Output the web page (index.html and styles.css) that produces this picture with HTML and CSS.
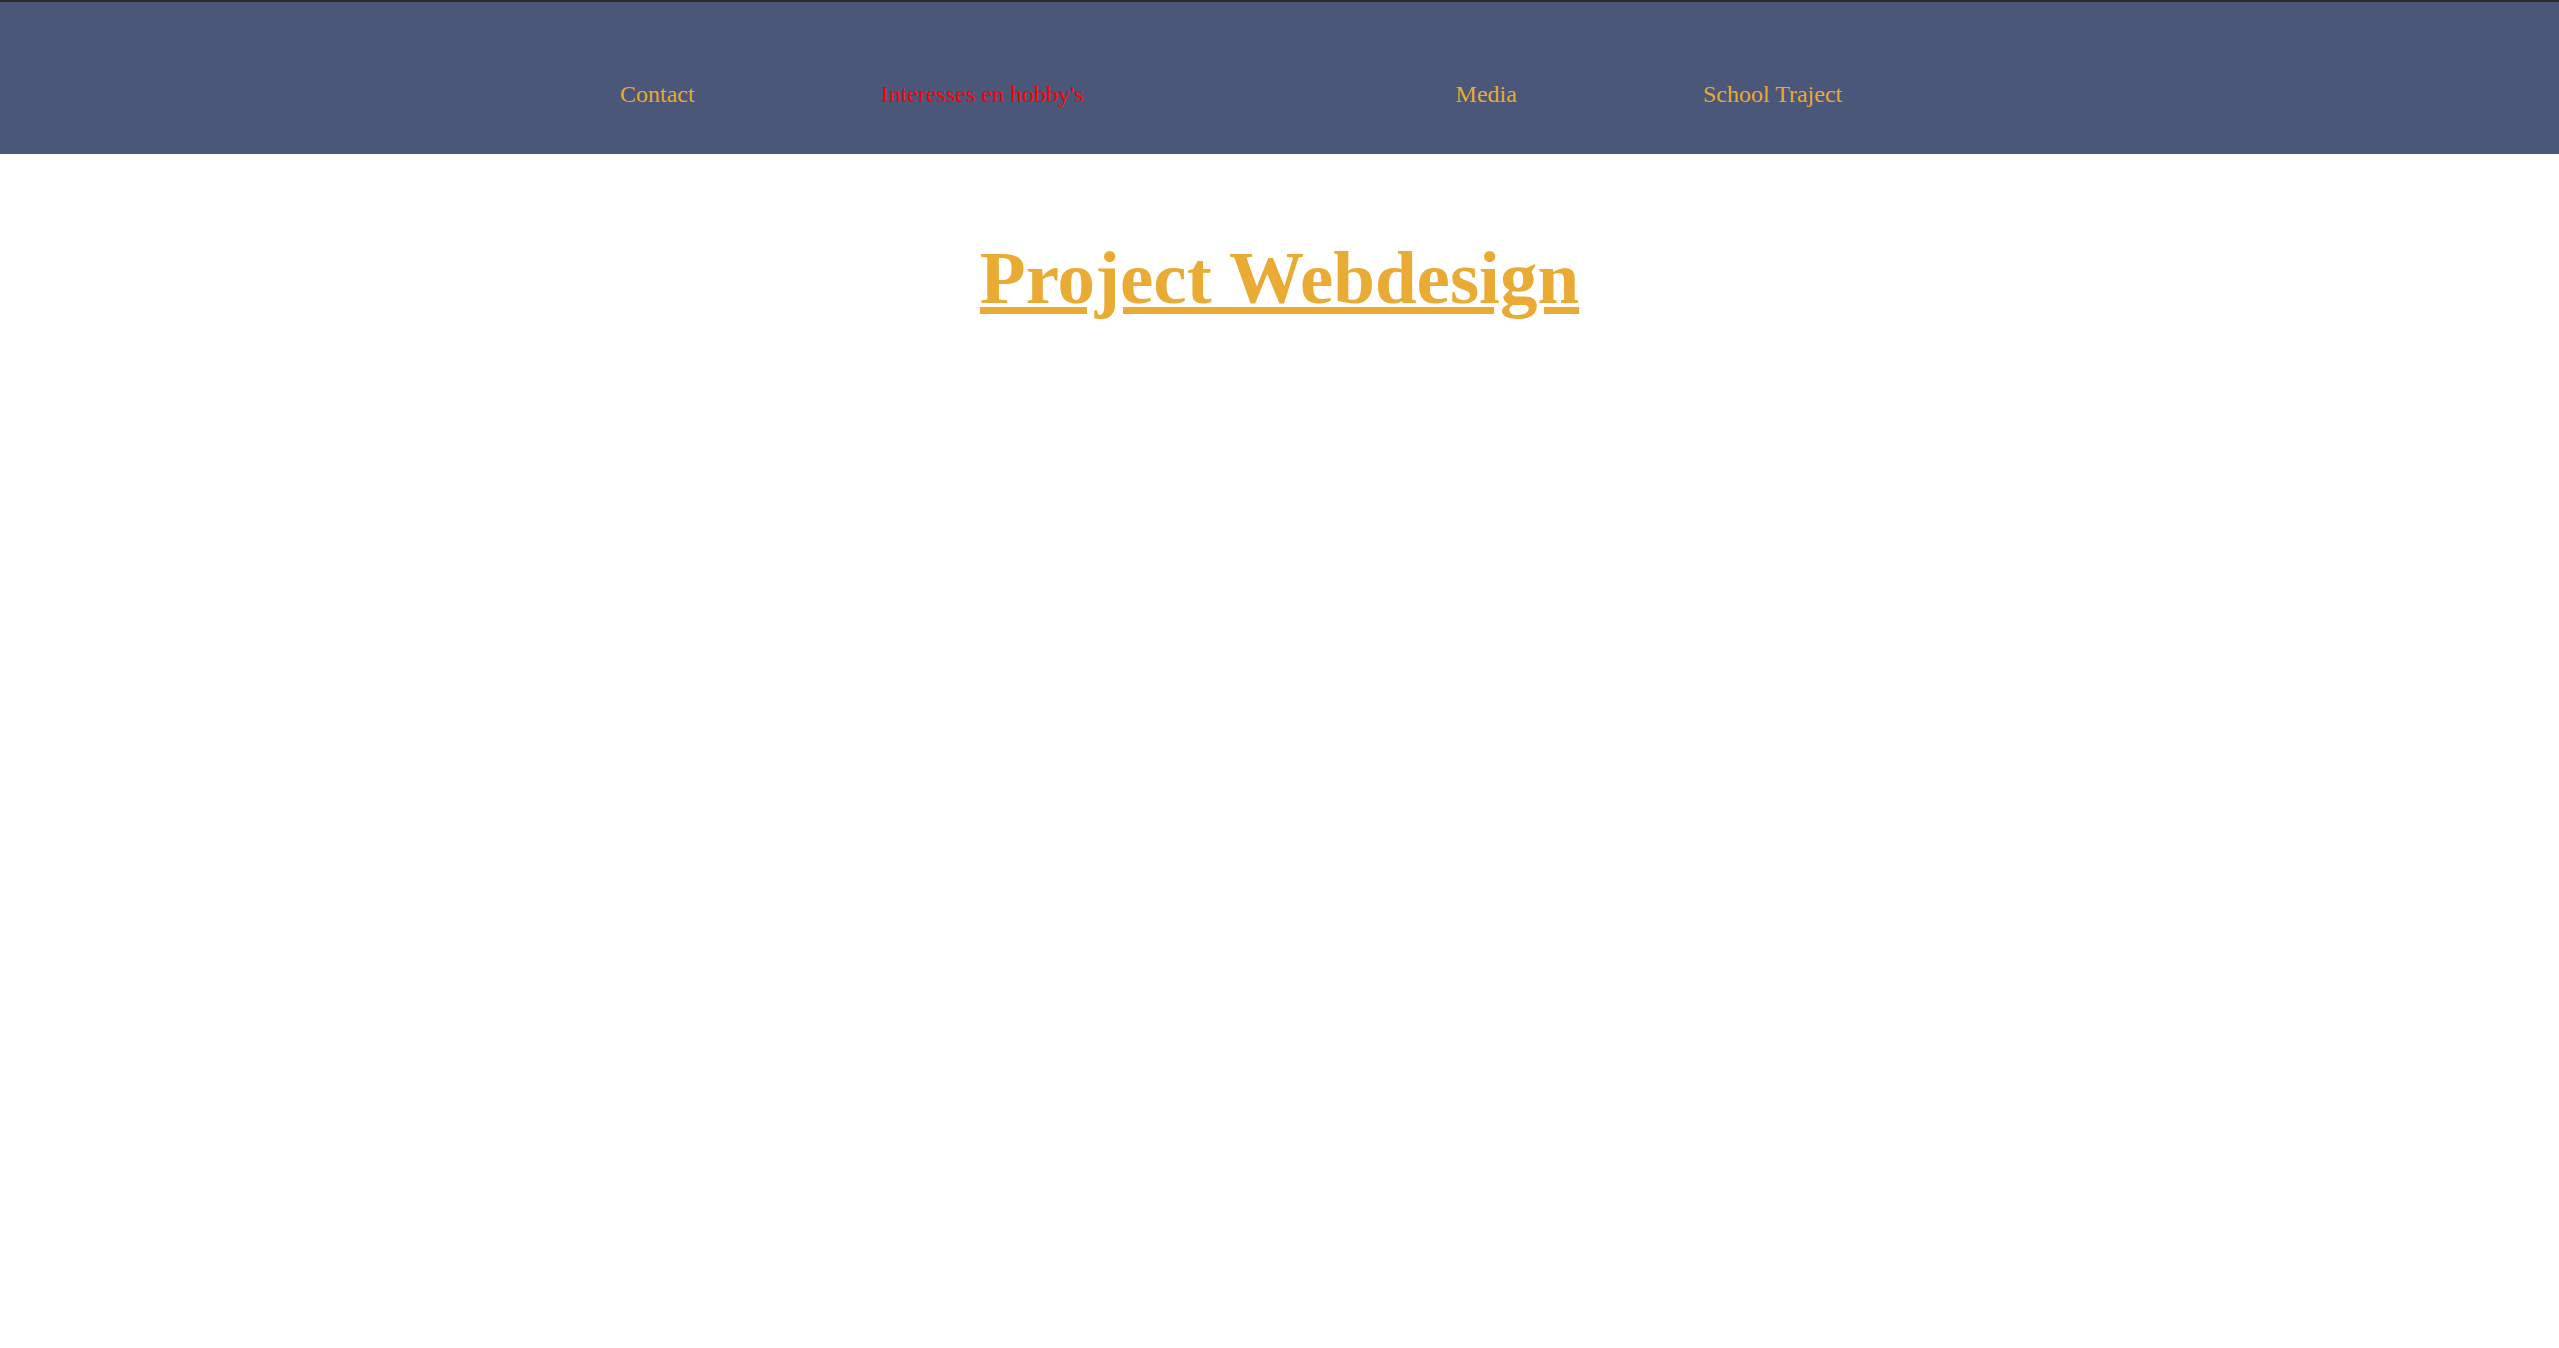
FILE: index.html
```html
<!DOCTYPE html>
<html lang="nl">
<head>
<meta charset="utf-8">
<title>Project Webdesign</title>
<link rel="stylesheet" href="styles.css">
</head>
<body>
<header class="topbar">
  <nav class="menu">
    <a class="menu-link" href="#">Contact</a>
    <a class="menu-link menu-link--active" href="#">Interesses en hobby's</a>
    <span class="menu-spacer"></span>
    <a class="menu-link" href="#">Media</a>
    <a class="menu-link" href="#">School Traject</a>
  </nav>
</header>
<main class="content">
  <h1 class="title">Project Webdesign</h1>
</main>
</body>
</html>
```

FILE: styles.css
```css
html, body {
  margin: 0;
  padding: 0;
  background: #ffffff;
}

body {
  font-family: "Liberation Serif", "Times New Roman", serif;
}

.topbar {
  border-top: 2px solid #2b2b2b;
  background: #4a5779;
  height: 154px;
  box-sizing: border-box;
}

.menu {
  display: flex;
  gap: 186px;
  padding-left: 620px;
  padding-top: 79px;
}

.menu-link {
  font-size: 24px;
  line-height: 1.15;
  color: #e8a935;
  text-decoration: none;
  white-space: nowrap;
}

.menu-link--active {
  color: #ff0000;
}

.menu-spacer {
  width: 0;
}

.content {
  text-align: center;
}

.title {
  margin: 81px 0 0;
  font-size: 75px;
  line-height: 1.15;
  font-weight: bold;
  color: #e9ab33;
  text-decoration: underline;
}
```
